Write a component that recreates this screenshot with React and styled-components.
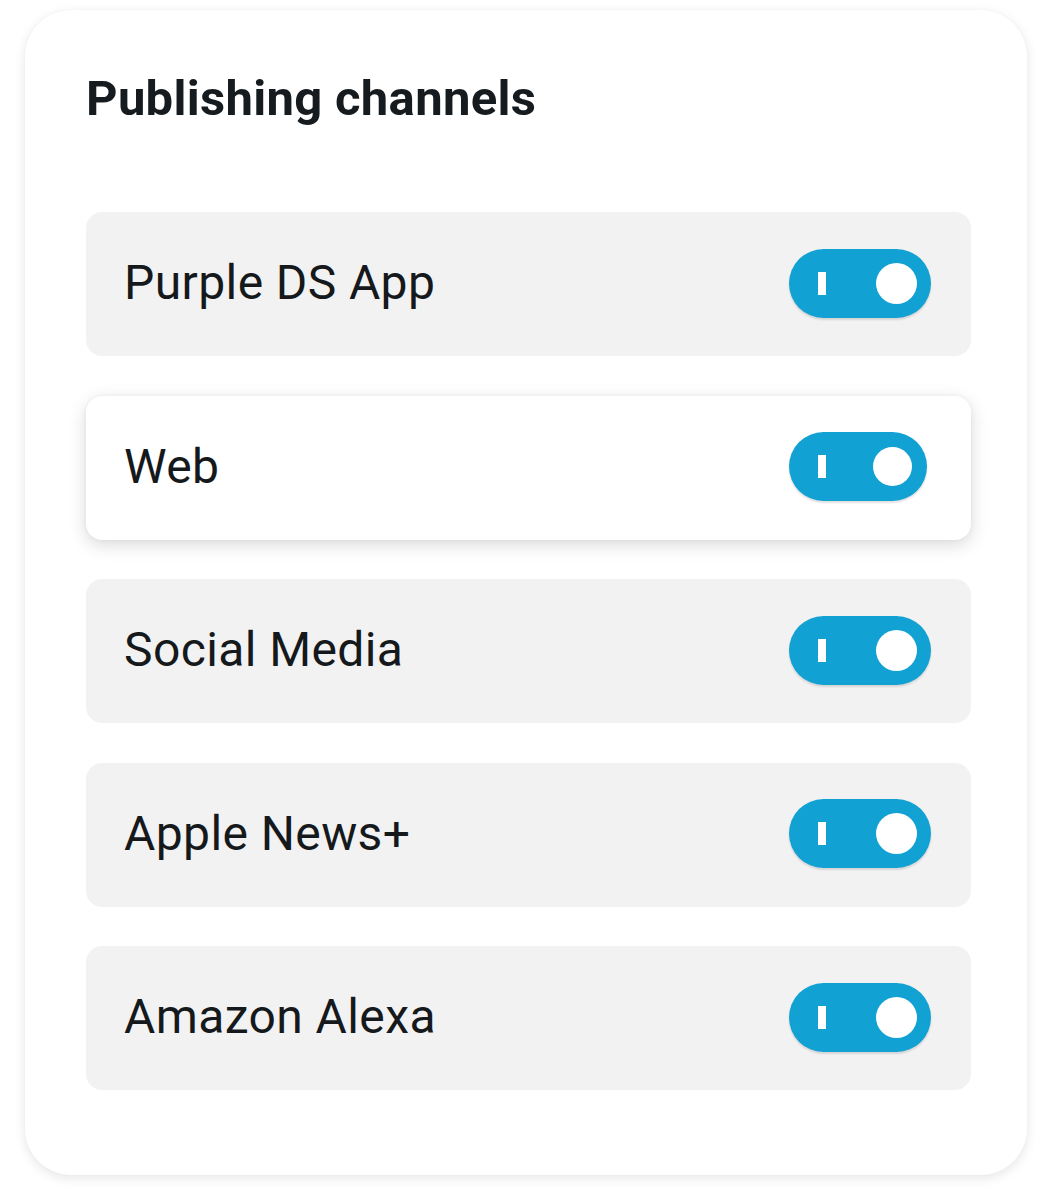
import React from "react";
import styled, { createGlobalStyle } from "styled-components";

const Global = createGlobalStyle`
  html, body { margin: 0; padding: 0; background: #ffffff; }
  body { font-family: Roboto, "Liberation Sans", sans-serif; }
`;

const Page = styled.div`
  padding: 10px 23px 19px 25px;
`;

const Card = styled.section`
  box-sizing: border-box;
  width: 1002px;
  height: 1165px;
  background: #ffffff;
  border-radius: 46px;
  box-shadow: 0 3px 12px rgba(0, 0, 0, 0.1), 0 0 2px rgba(0, 0, 0, 0.04);
  padding: 59px 56px 0 61px;
  display: flex;
  flex-direction: column;
`;

const Title = styled.h2`
  margin: 0;
  font-family: Roboto, "Liberation Sans", sans-serif;
  font-weight: 700;
  font-size: 49px;
  line-height: 60px;
  color: #161b1f;
  letter-spacing: 0.3px;
`;

const List = styled.div`
  margin-top: 83px;
  display: flex;
  flex-direction: column;
  gap: 39.5px;
`;

const Row = styled.div`
  height: 144px;
  border-radius: 16px;
  background: ${(p) => (p.$raised ? "#ffffff" : "#f2f2f2")};
  box-shadow: ${(p) =>
    p.$raised ? "0 5px 18px rgba(0,0,0,0.15), 0 0 4px rgba(0,0,0,0.05)" : "none"};
  display: flex;
  align-items: center;
  justify-content: space-between;
  padding: 0 40px 0 38px;
  box-sizing: border-box;
`;

const Label = styled.span`
  font-family: Roboto, "Liberation Sans", sans-serif;
  font-size: 48px;
  font-weight: 400;
  color: #15191c;
  letter-spacing: 0.4px;
  margin-top: -3px;
`;

const Toggle = styled.div`
  width: ${(p) => p.$w}px;
  height: 69px;
  margin-right: ${(p) => 142 - p.$w}px;
  margin-top: -2px;
  border-radius: 35px;
  background: #12a1d3;
  box-shadow: 0 2px 2px rgba(0, 0, 0, 0.12);
  display: flex;
  align-items: center;
  justify-content: space-between;
  padding: 0 ${(p) => (p.$w === 142 ? 14 : 15)}px 0 29px;
  box-sizing: border-box;
  flex-shrink: 0;
`;

const OnMark = styled.span`
  width: 8px;
  height: 23px;
  background: #ffffff;
`;

const Knob = styled.span`
  width: ${(p) => p.$d}px;
  height: ${(p) => p.$d}px;
  border-radius: 50%;
  background: #ffffff;
`;

const channels = [
  { name: "Purple DS App" },
  { name: "Web", raised: true },
  { name: "Social Media" },
  { name: "Apple News+" },
  { name: "Amazon Alexa" },
];

export default function App() {
  return (
    <>
      <Global />
      <Page>
        <Card>
          <Title>Publishing channels</Title>
          <List>
            {channels.map((c) => (
              <Row key={c.name} $raised={c.raised}>
                <Label>{c.name}</Label>
                <Toggle $w={c.raised ? 138 : 142} role="switch" aria-checked="true">
                  <OnMark />
                  <Knob $d={c.raised ? 39 : 41} />
                </Toggle>
              </Row>
            ))}
          </List>
        </Card>
      </Page>
    </>
  );
}
